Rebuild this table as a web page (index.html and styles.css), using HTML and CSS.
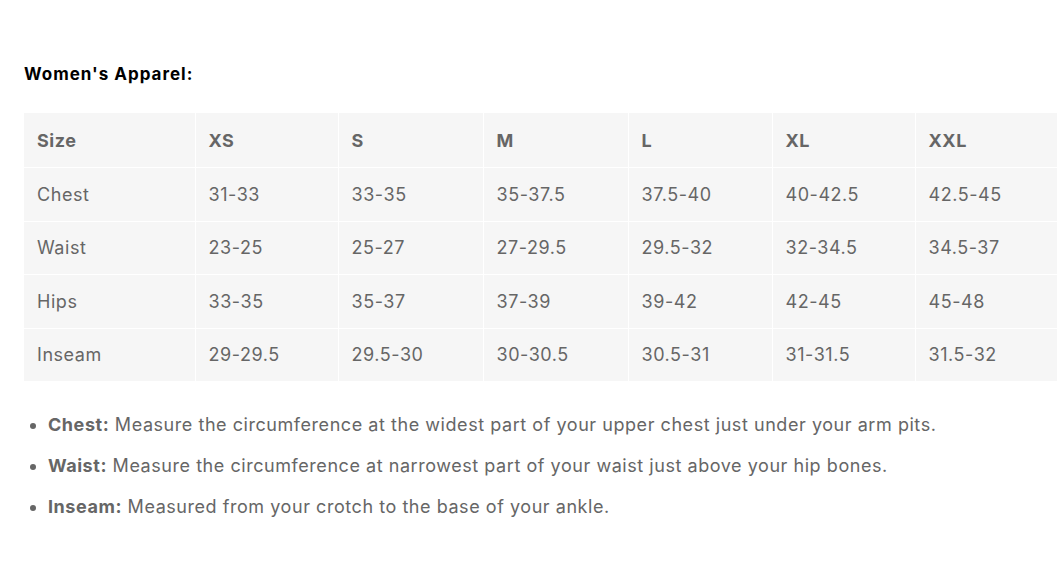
FILE: index.html
```html
<!DOCTYPE html>
<html>
<head>
<meta charset="utf-8">
<link rel="stylesheet" href="styles.css">
</head>
<body>
<div class="page">
  <h3 class="title">Women's Apparel:</h3>
  <table class="size-table">
    <colgroup>
      <col class="c-label">
      <col class="c-xs">
      <col class="c-s">
      <col class="c-m">
      <col class="c-l">
      <col class="c-xl">
      <col class="c-xxl">
    </colgroup>
    <thead>
      <tr><th>Size</th><th>XS</th><th>S</th><th>M</th><th>L</th><th>XL</th><th>XXL</th></tr>
    </thead>
    <tbody>
      <tr><td>Chest</td><td>31-33</td><td>33-35</td><td>35-37.5</td><td>37.5-40</td><td>40-42.5</td><td>42.5-45</td></tr>
      <tr><td>Waist</td><td>23-25</td><td>25-27</td><td>27-29.5</td><td>29.5-32</td><td>32-34.5</td><td>34.5-37</td></tr>
      <tr><td>Hips</td><td>33-35</td><td>35-37</td><td>37-39</td><td>39-42</td><td>42-45</td><td>45-48</td></tr>
      <tr><td>Inseam</td><td>29-29.5</td><td>29.5-30</td><td>30-30.5</td><td>30.5-31</td><td>31-31.5</td><td>31.5-32</td></tr>
    </tbody>
  </table>
  <ul class="notes">
    <li><strong>Chest:</strong> Measure the circumference at the widest part of your upper chest just under your arm pits.</li>
    <li><strong>Waist:</strong> Measure the circumference at narrowest part of your waist just above your hip bones.</li>
    <li><strong>Inseam:</strong> Measured from your crotch to the base of your ankle.</li>
  </ul>
</div>
</body>
</html>
```

FILE: styles.css
```css
html, body {
  margin: 0;
  padding: 0;
  background: #ffffff;
}
.page {
  padding: 62px 0 0 24px;
  font-family: "Inter", "Liberation Sans", sans-serif;
  color: #666666;
}
.title {
  margin: 0 0 27px 0;
  font-size: 17px;
  line-height: 24px;
  font-weight: 700;
  color: #000000;
  letter-spacing: 1px;
}
.size-table {
  width: 1033px;
  table-layout: fixed;
  border-collapse: collapse;
  background: #f6f6f6;
  font-size: 18px;
  letter-spacing: 0.55px;
}
.c-label { width: 171px; }
.c-xs { width: 143px; }
.c-s { width: 145px; }
.c-m { width: 145px; }
.c-l { width: 144px; }
.c-xl { width: 143px; }
.c-xxl { width: 142px; }
.size-table th,
.size-table td {
  border: 1px solid #ffffff;
  text-align: left;
  height: 52.5px;
  padding: 0 0 0 13px;
  color: #666666;
  font-weight: 400;
}
.size-table thead th {
  border-top: none;
  font-weight: 700;
  height: 54px;
}
.size-table th:first-child,
.size-table td:first-child {
  border-left: none;
}
.size-table tbody tr:last-child td {
  border-bottom: none;
}
.notes {
  margin: 30px 0 0 0;
  padding: 0 0 0 24px;
  font-size: 18px;
  line-height: 27px;
  color: #666666;
  letter-spacing: 0.55px;
}
.notes li {
  margin-bottom: 14px;
}
.notes strong {
  font-weight: 700;
}
```
